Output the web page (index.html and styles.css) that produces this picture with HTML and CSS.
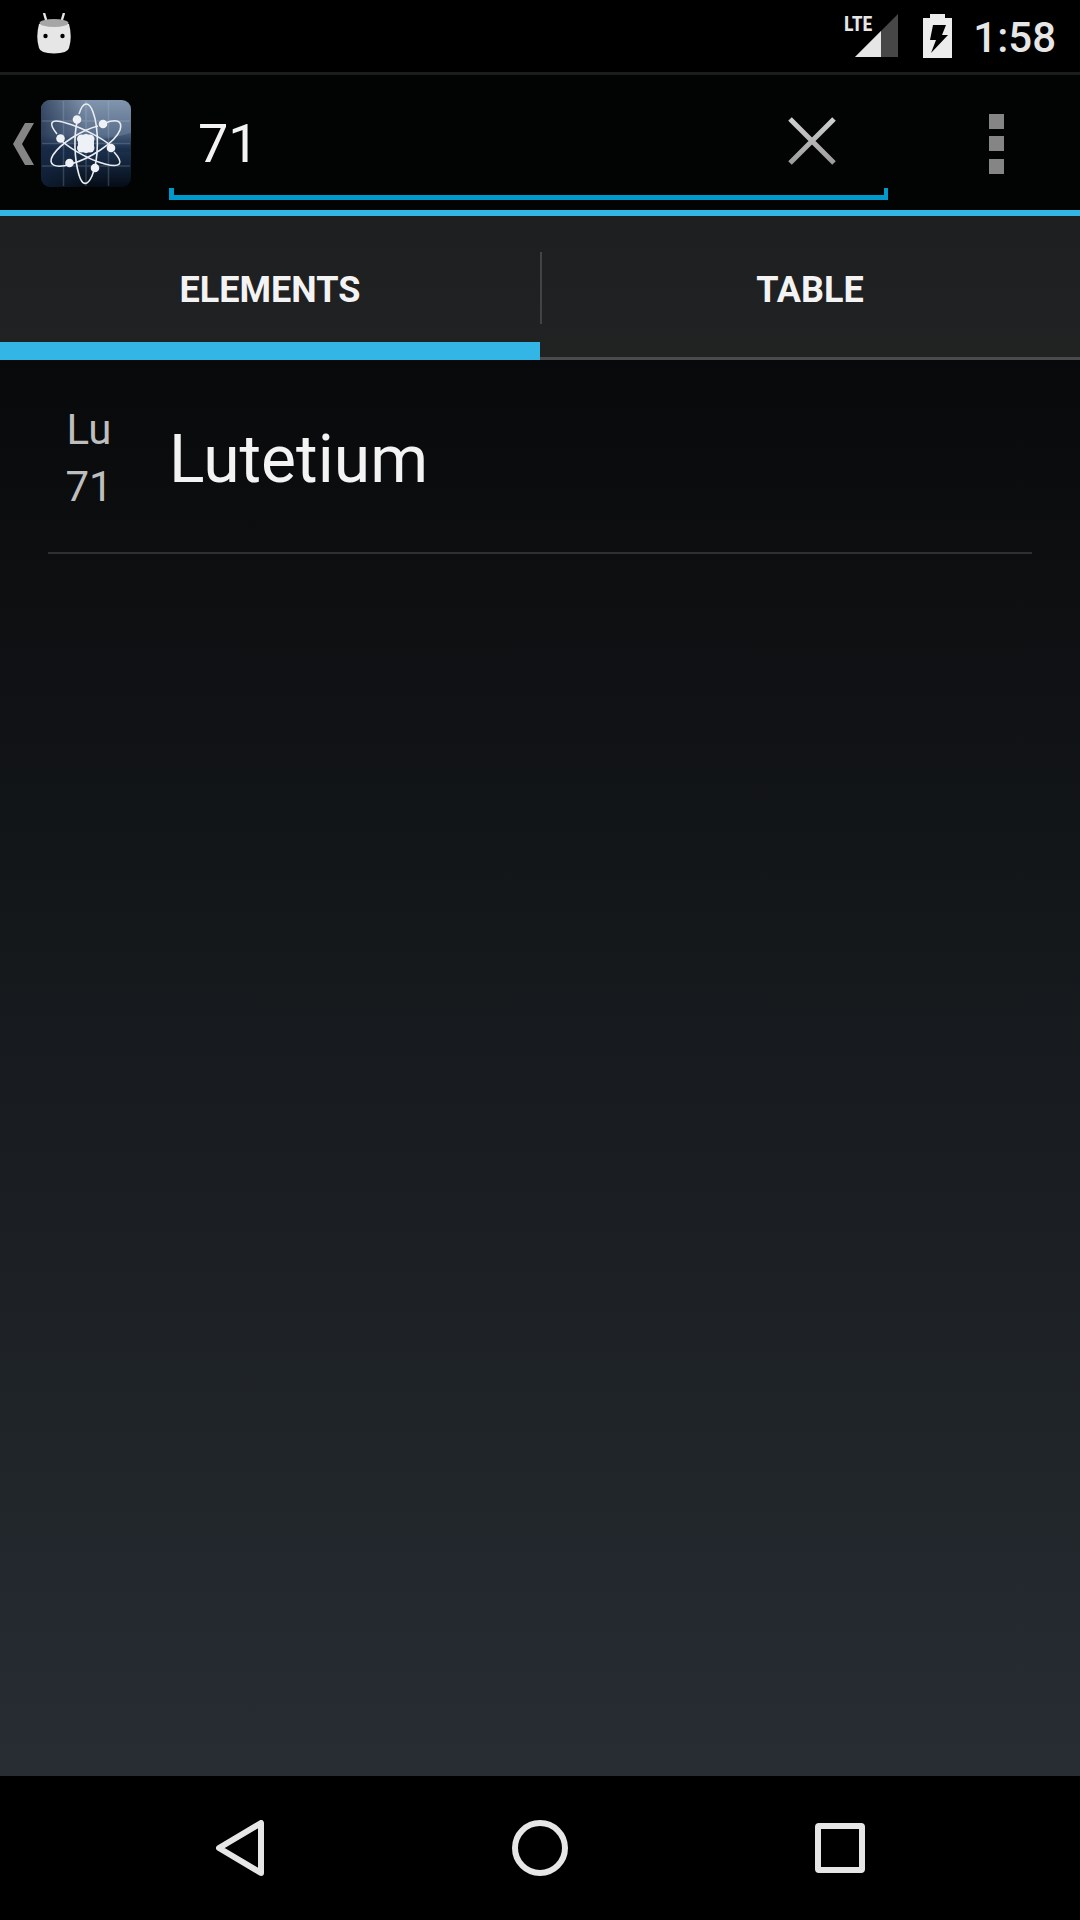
FILE: index.html
```html
<!DOCTYPE html>
<html lang="en">
<head>
<meta charset="utf-8">
<meta name="viewport" content="width=device-width, initial-scale=1">
<title>Elements</title>
<link rel="stylesheet" href="styles.css">
</head>
<body>
<div class="screen">
  <div class="status-bar">
    <svg class="status-robot" width="34" height="42" viewBox="0 0 34 42" aria-hidden="true">
      <path d="M7 0l3 10M27 0l-3 10" stroke="#e6e6e6" stroke-width="2.4" fill="none"/>
      <path d="M2 11Q-1.500 24 2 35Q3 40 17 40.500Q31 40 32 35Q35.500 24 32 11Z" fill="#e6e6e6"/>
      <ellipse cx="17" cy="10" rx="14.500" ry="4" fill="#a6a6a6"/>
      <circle cx="8.500" cy="23" r="2.200" fill="#000"/>
      <circle cx="25.500" cy="23" r="2.200" fill="#000"/>
    </svg>
    <div class="status-right">
      <div class="signal">
        <span class="signal-type">LTE</span>
        <svg width="43" height="43" viewBox="0 0 43 43" aria-hidden="true">
          <path d="M43 0V43H0Z" fill="#474747"/>
          <path d="M26 17V43H0Z" fill="#e6e6e6"/>
        </svg>
      </div>
      <svg class="battery" width="29" height="44" viewBox="0 0 29 44" aria-hidden="true">
        <path d="M7 0H22V4H29V44H0V4H7Z" fill="#ececec"/>
        <path d="M10 11H23L19 21H25L8 39L13 26H7Z" fill="#000"/>
      </svg>
      <time class="clock">1:58</time>
    </div>
  </div>

  <header class="action-bar">
    <button class="up" type="button" aria-label="Navigate up">
      <svg width="21" height="42" viewBox="0 0 21 42" aria-hidden="true">
        <path d="M12 0H21L9 21L21 42H12L0 21Z" fill="#858585"/>
      </svg>
      <svg width="90" height="88" viewBox="0 0 90 88" aria-hidden="true">
        <defs>
          <linearGradient id="sky" x1="0" y1="0" x2="0" y2="1">
            <stop offset="0" stop-color="#8295ae"/>
            <stop offset=".4" stop-color="#5a6f8c"/>
            <stop offset=".56" stop-color="#1c3350"/>
            <stop offset="1" stop-color="#050c17"/>
          </linearGradient>
          <linearGradient id="shade" x1="0" y1="0" x2="1" y2="0">
            <stop offset="0" stop-color="#142540" stop-opacity=".65"/>
            <stop offset=".5" stop-color="#142540" stop-opacity="0"/>
          </linearGradient>
        </defs>
        <rect width="90" height="87" rx="9" fill="url(#sky)"/>
        <rect width="90" height="87" rx="9" fill="url(#shade)"/>
        <path d="M0 44Q50 44 90 33V52H0Z" fill="#142944" opacity=".3"/>
        <path d="M22.500 1V86M45 1V86M67.500 1V86M1 21H89M1 43.500H89M1 66H89" stroke="#b8cce0" stroke-opacity=".22" stroke-width="1.500"/>
        <g fill="none" stroke="#e9edf2" stroke-width="1.600">
          <path d="M38 14C42 1 48 1 52 12C58 28 58 60 51 76C46 87 41 85 38 75C33 58 33 36 36 22"/>
          <path d="M64 23C75 19 82 20 79 30C74 43 48 59 30 64C14 69 6 65 12 55C20 43 41 30 57 26"/>
          <path d="M16 34C7 23 9 18 25 23C43 28 64 40 70 46M73 52C84 64 79 68 64 64C45 59 24 45 19 39"/>
        </g>
        <g fill="#eef1f5">
          <circle cx="36" cy="19.500" r="4.300"/>
          <circle cx="62" cy="24" r="4.300"/>
          <circle cx="19.500" cy="38.500" r="4.300"/>
          <circle cx="70" cy="48" r="4.300"/>
          <circle cx="28.500" cy="63" r="4.300"/>
          <circle cx="54" cy="68" r="4.300"/>
          <circle cx="40.500" cy="39" r="4.500"/>
          <circle cx="49" cy="39" r="4.500"/>
          <circle cx="40.500" cy="48" r="4.500"/>
          <circle cx="49" cy="48" r="4.500"/>
          <circle cx="45" cy="38" r="4"/>
          <circle cx="45" cy="49" r="4"/>
          <rect x="37" y="39" width="16" height="9"/>
        </g>
      </svg>
    </button>
    <form class="search" role="search">
      <input class="search-text" type="text" value="71" aria-label="Search elements">
      <button class="search-clear" type="button" aria-label="Clear query">
        <svg width="48" height="48" viewBox="0 0 48 48" aria-hidden="true">
          <defs>
            <linearGradient id="cross" gradientUnits="userSpaceOnUse" x1="0" y1="0" x2="0" y2="48">
              <stop offset="0" stop-color="#d2d2d2"/>
              <stop offset="1" stop-color="#9a9a9a"/>
            </linearGradient>
          </defs>
          <path d="M2 2L46 46M46 2L2 46" stroke="url(#cross)" stroke-width="5"/>
        </svg>
      </button>
    </form>
    <button class="overflow" type="button" aria-label="More options">
      <svg width="15" height="60" viewBox="0 0 15 60" aria-hidden="true">
        <path d="M0 0H15V15H0ZM0 22H15V37H0ZM0 45H15V60H0Z" fill="#858585"/>
      </svg>
    </button>
  </header>

  <nav class="tabs" role="tablist">
    <button class="tab tab-active" type="button" role="tab" aria-selected="true">ELEMENTS</button>
    <span class="tab-divider"></span>
    <button class="tab" type="button" role="tab" aria-selected="false">TABLE</button>
  </nav>

  <main class="content">
    <ul class="elements">
      <li>
        <a class="element" href="#lutetium">
          <span class="element-key"><span>Lu</span><span>71</span></span>
          <span class="element-name">Lutetium</span>
        </a>
      </li>
    </ul>
  </main>
</div>

<div class="nav-bar">
  <button type="button" aria-label="Back">
    <svg width="48" height="56" viewBox="0 0 48 56" aria-hidden="true">
      <path d="M45 3V53L3 28Z" fill="none" stroke="#e6e6e6" stroke-width="6" stroke-linejoin="round"/>
    </svg>
  </button>
  <button type="button" aria-label="Home">
    <svg width="56" height="56" viewBox="0 0 56 56" aria-hidden="true">
      <circle cx="28" cy="28" r="25" fill="none" stroke="#e6e6e6" stroke-width="6"/>
    </svg>
  </button>
  <button type="button" aria-label="Recent apps">
    <svg width="50" height="50" viewBox="0 0 50 50" aria-hidden="true">
      <path fill-rule="evenodd" d="M4 0H46Q50 0 50 4V46Q50 50 46 50H4Q0 50 0 46V4Q0 0 4 0ZM6 6V44H44V6Z" fill="#e6e6e6"/>
    </svg>
  </button>
</div>
</body>
</html>
```
FILE: styles.css
```css
* {
  box-sizing: border-box;
}

body {
  margin: 0;
  min-height: 100vh;
  display: flex;
  flex-direction: column;
  background: #000;
  color: #f3f3f3;
  font-family: Roboto, "Noto Sans", sans-serif;
}

button,
input {
  margin: 0;
  padding: 0;
  border: 0;
  background: none;
  color: inherit;
  font: inherit;
}

svg {
  display: block;
  flex: none;
}

.screen {
  flex: 1;
  display: flex;
  flex-direction: column;
  background: linear-gradient(#000, #272d33);
}

.status-bar {
  height: 75px;
  padding: 13px 24px 0 37px;
  display: flex;
  justify-content: space-between;
  align-items: flex-start;
  background: #000;
  border-bottom: 3px solid #1c1c1c;
}

.status-right {
  display: flex;
  padding-top: 1px;
}

.signal {
  display: flex;
  margin-right: 25px;
}

.signal-type {
  margin-right: -17px;
  font-family: "Roboto Condensed", "Liberation Sans Narrow", Roboto, sans-serif;
  font-weight: 700;
  font-size: 20px;
  line-height: 20px;
  color: #e6e6e6;
}

.battery {
  margin-right: 21px;
}

.clock {
  font-size: 42px;
  font-weight: 500;
  line-height: 48px;
  color: #e6e6e6;
}

.action-bar {
  height: 141px;
  display: flex;
  background: #020303;
  border-bottom: 6px solid #33b5e5;
}

.up {
  flex: none;
  display: flex;
  align-items: center;
  gap: 7px;
  padding: 2px 38px 0 13px;
}

.search {
  flex: 1;
  min-width: 0;
  display: flex;
  margin-bottom: 10px;
  background:
    linear-gradient(#09c, #09c) left bottom / 5px 12px no-repeat,
    linear-gradient(#09c, #09c) right bottom / 4px 12px no-repeat,
    linear-gradient(#09c, #09c) left bottom / 100% 5px no-repeat;
}

.search-text {
  flex: 1;
  min-width: 0;
  padding: 12px 0 0 29px;
  font-size: 54px;
  line-height: 64px;
  outline: 0;
}

.search-clear {
  flex: none;
  width: 152px;
  padding-top: 6px;
  display: flex;
  justify-content: center;
  align-items: center;
}

.overflow {
  flex: none;
  width: 192px;
  padding: 2px 0 0 24px;
  display: flex;
  justify-content: center;
  align-items: center;
}

.tabs {
  height: 144px;
  display: flex;
  background: rgba(255, 255, 255, 0.1);
}

.tab {
  flex: 1;
  padding-top: 6px;
  border-bottom: 3px solid #4a4b4d;
  font-size: 36px;
  font-weight: 700;
  line-height: 42px;
}

.tab-active {
  padding-top: 21px;
  border-bottom: 18px solid #33b5e5;
}

.tab-divider {
  width: 2px;
  margin-right: -2px;
  height: 72px;
  margin-top: 36px;
  background: #434344;
}

.content {
  flex: 1;
  padding: 0 48px;
}

.elements {
  margin: 0;
  padding: 0;
  list-style: none;
}

.element {
  display: flex;
  align-items: center;
  gap: 39px;
  padding: 41px 0 37px;
  border-bottom: 2px solid #2f3032;
  color: inherit;
  text-decoration: none;
}

.element-key {
  width: 82px;
  display: flex;
  flex-direction: column;
  align-items: center;
  font-size: 42px;
  line-height: 57px;
  color: #bebebe;
}

.element-name {
  padding-top: 4px;
  font-size: 66px;
  line-height: 78px;
}

.nav-bar {
  height: 144px;
  padding: 0 90px;
  display: flex;
  background: #000;
}

.nav-bar button {
  flex: 1;
  display: flex;
  justify-content: center;
  align-items: center;
}
```
